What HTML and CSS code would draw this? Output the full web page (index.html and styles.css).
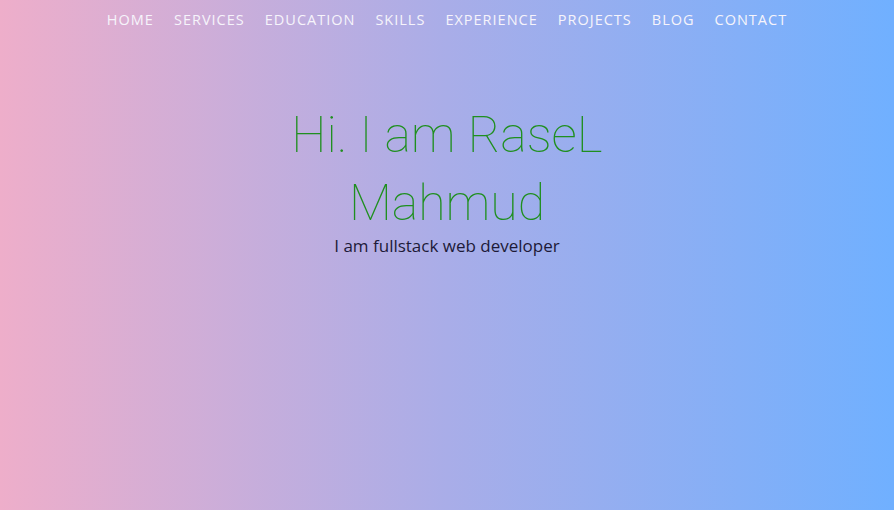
FILE: index.html
```html
<!DOCTYPE html>
<html lang="en">
<head>
<meta charset="utf-8">
<title>RaseL Mahmud</title>
<link rel="stylesheet" href="styles.css">
</head>
<body>
<header class="hero">
  <nav class="nav">
    <a class="nav-link" href="#">Home</a>
    <a class="nav-link" href="#">Services</a>
    <a class="nav-link" href="#">Education</a>
    <a class="nav-link" href="#">Skills</a>
    <a class="nav-link" href="#">Experience</a>
    <a class="nav-link" href="#">Projects</a>
    <a class="nav-link" href="#">Blog</a>
    <a class="nav-link" href="#">Contact</a>
  </nav>
  <div class="intro">
    <h1 class="title">Hi. I am RaseL<br>Mahmud</h1>
    <p class="subtitle">I am fullstack web developer</p>
  </div>
</header>
</body>
</html>
```
FILE: styles.css
```css
html, body {
  margin: 0;
  padding: 0;
  height: 100%;
}
body {
  font-family: "Open Sans", "DejaVu Sans", sans-serif;
  background: linear-gradient(to right, #eeaeca 0%, #a9ade8 50%, #70b0ff 100%);
}
.hero {
  height: 510px;
  display: flex;
  flex-direction: column;
  align-items: center;
}
.nav {
  display: flex;
  gap: 20px;
  padding-top: 10px;
  height: 20px;
}
.nav-link {
  color: #f6f4fb;
  text-decoration: none;
  text-transform: uppercase;
  font-size: 14.5px;
  letter-spacing: 1px;
  line-height: 20px;
}
.intro {
  margin-top: 71px;
  text-align: center;
}
.title {
  margin: 0;
  font-family: Roboto, "Open Sans", sans-serif;
  font-weight: 100;
  font-size: 50px;
  line-height: 68px;
  color: #1f8f1f;
}
.subtitle {
  margin: 0;
  font-size: 17px;
  line-height: 18px;
  color: #1d1a38;
}
```
